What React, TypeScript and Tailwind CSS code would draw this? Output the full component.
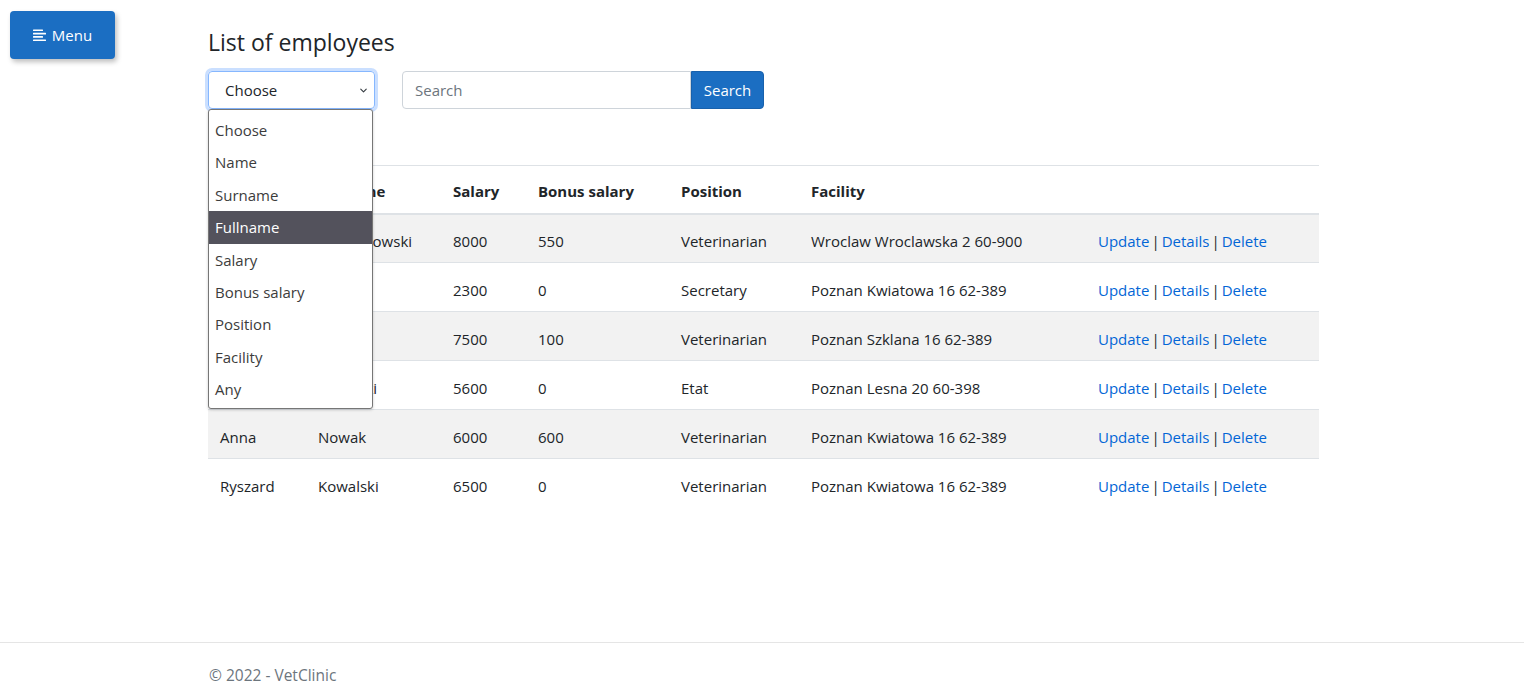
import { ChevronDown } from 'lucide-react'

const employees = [
  { name: 'Jan', surname: 'Lewandowski', salary: 8000, bonus: 550, position: 'Veterinarian', facility: 'Wroclaw Wroclawska 2 60-900' },
  { name: 'Maria', surname: 'Kot', salary: 2300, bonus: 0, position: 'Secretary', facility: 'Poznan Kwiatowa 16 62-389' },
  { name: 'Piotr', surname: 'Mazur', salary: 7500, bonus: 100, position: 'Veterinarian', facility: 'Poznan Szklana 16 62-389' },
  { name: 'Adam', surname: 'Nowacki', salary: 5600, bonus: 0, position: 'Etat', facility: 'Poznan Lesna 20 60-398' },
  { name: 'Anna', surname: 'Nowak', salary: 6000, bonus: 600, position: 'Veterinarian', facility: 'Poznan Kwiatowa 16 62-389' },
  { name: 'Ryszard', surname: 'Kowalski', salary: 6500, bonus: 0, position: 'Veterinarian', facility: 'Poznan Kwiatowa 16 62-389' },
]

const options = ['Choose', 'Name', 'Surname', 'Fullname', 'Salary', 'Bonus salary', 'Position', 'Facility', 'Any']

function MenuIcon() {
  return (
    <svg width="14" height="13" viewBox="0 0 14 13" fill="currentColor">
      <rect x="0" y="0.5" width="10" height="1.6" rx="0.5" />
      <rect x="0" y="3.8" width="13" height="1.6" rx="0.5" />
      <rect x="0" y="7.1" width="10" height="1.6" rx="0.5" />
      <rect x="0" y="10.4" width="13" height="1.6" rx="0.5" />
    </svg>
  )
}

export default function App() {
  return (
    <div className="min-h-[696px] bg-white text-[16px] text-[#212529] flex flex-col" style={{ fontFamily: '"Open Sans", "Noto Sans", sans-serif' }}>
      <div className="flex-1 relative">
        {/* Menu button */}
        <button className="absolute left-[10px] top-[11px] w-[105px] h-[48px] rounded-[4px] bg-[#1b6ec2] text-white flex items-center justify-center gap-[5px] shadow-[2px_3px_5px_rgba(0,0,0,0.25)] text-[15px]">
          <MenuIcon />
          Menu
        </button>

        <main className="w-[1111px] ml-[208px] pt-[26px]">
          <h4 className="text-[23px] leading-[32px] mb-[13px]">List of employees</h4>

          {/* Filter form */}
          <div className="flex items-center relative">
            <div className="w-[167px] h-[38px] border border-[#86b7fe] rounded-[4px] shadow-[0_0_0_3px_rgba(13,110,253,0.22)] flex items-center justify-between pl-[16px] pr-[5px] text-[#212529] text-[15px]">
              <span>Choose</span>
              <ChevronDown size={11} strokeWidth={2.4} className="text-[#343a40]" />
            </div>
            <div className="ml-[27px] flex">
              <div className="w-[289px] h-[38px] border border-[#ced4da] rounded-l-[4px] flex items-center px-[12px] text-[#6c757d] text-[15px]">
                Search
              </div>
              <button className="h-[38px] w-[73px] bg-[#1b6ec2] border border-[#1861ac] text-white rounded-r-[4px] text-[15px]">
                Search
              </button>
            </div>

            {/* Open select list */}
            <div className="absolute left-0 top-[38px] w-[165px] h-[300px] bg-white border border-[#767676] rounded-[3px] shadow-[0_1px_3px_rgba(0,0,0,0.2)] py-[4px] z-10 text-[15px]">
              {options.map((o) => (
                <div
                  key={o}
                  className={
                    o === 'Fullname'
                      ? 'h-[32.4px] flex items-center px-[6px] bg-[#53525c] text-white'
                      : 'h-[32.4px] flex items-center px-[6px] text-[#3c3c3c]'
                  }
                >
                  {o}
                </div>
              ))}
            </div>
          </div>

          {/* Table */}
          <table className="w-full mt-[56px] border-t border-[#dee2e6] text-left text-[15px]">
            <thead>
              <tr className="h-[48px] border-b-2 border-[#dee2e6]">
                <th className="pl-[12px] pt-[4px] w-[98px] font-bold">Name</th>
                <th className="pl-[12px] pt-[4px] w-[135px] font-bold">Surname</th>
                <th className="pl-[12px] pt-[4px] w-[85px] font-bold">Salary</th>
                <th className="pl-[12px] pt-[4px] w-[143px] font-bold">Bonus salary</th>
                <th className="pl-[12px] pt-[4px] w-[130px] font-bold">Position</th>
                <th className="pl-[12px] pt-[4px] w-[287px] font-bold">Facility</th>
                <th className="pl-[12px]"></th>
              </tr>
            </thead>
            <tbody>
              {employees.map((e, i) => (
                <tr
                  key={i}
                  className={
                    (i % 2 === 0 ? 'bg-[#f2f2f2] ' : '') +
                    (i < employees.length - 1 ? 'h-[49px] border-b border-[#dee2e6]' : 'h-[49px]')
                  }
                >
                  <td className="pl-[12px] pt-[6px]">{e.name}</td>
                  <td className="pl-[12px] pt-[6px]">{e.surname}</td>
                  <td className="pl-[12px] pt-[6px]">{e.salary}</td>
                  <td className="pl-[12px] pt-[6px]">{e.bonus}</td>
                  <td className="pl-[12px] pt-[6px]">{e.position}</td>
                  <td className="pl-[12px] pt-[6px]">{e.facility}</td>
                  <td className="pl-[12px] pt-[6px]">
                    <a href="#" className="text-[#0366d6]">Update</a>
                    <span className="px-[2px]">|</span>
                    <a href="#" className="text-[#0366d6]">Details</a>
                    <span className="px-[2px]">|</span>
                    <a href="#" className="text-[#0366d6]">Delete</a>
                  </td>
                </tr>
              ))}
            </tbody>
          </table>
        </main>
      </div>

      <footer className="border-t border-[#e5e5e5] h-[54px]">
        <div className="w-[1111px] ml-[209px] pt-[21px] text-[#6c757d] text-[15.5px]">© 2022 - VetClinic</div>
      </footer>
    </div>
  )
}
